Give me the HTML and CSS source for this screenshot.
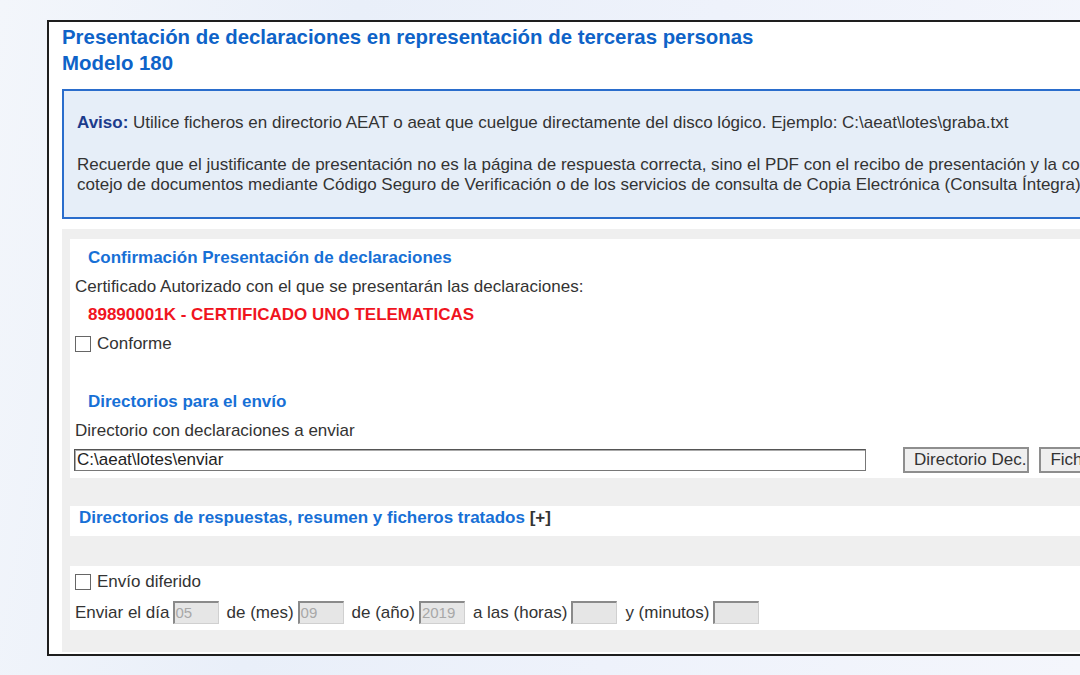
FILE: index.html
```html
<!DOCTYPE html>
<html lang="es">
<head>
<meta charset="utf-8">
<title>Modelo 180</title>
<link rel="stylesheet" href="styles.css">
</head>
<body>
<div class="page">
  <div class="panel">
    <h1 class="title">Presentación de declaraciones en representación de terceras personas<br>Modelo 180</h1>
    <div class="aviso">
      <p class="aviso-line"><b>Aviso:</b> Utilice ficheros en directorio AEAT o aeat que cuelgue directamente del disco lógico. Ejemplo: C:\aeat\lotes\graba.txt</p>
      <p class="aviso-para">Recuerde que el justificante de presentación no es la página de respuesta correcta, sino el PDF con el recibo de presentación y la copia de la declaración, que puede obtenerse mediante el<br>cotejo de documentos mediante Código Seguro de Verificación o de los servicios de consulta de Copia Electrónica (Consulta Íntegra) disponibles en la sede electrónica.</p>
    </div>
    <div class="form-area">
      <div class="box box-main">
        <h2 class="sec-title">Confirmación Presentación de declaraciones</h2>
        <p class="line">Certificado Autorizado con el que se presentarán las declaraciones:</p>
        <p class="cert">89890001K - CERTIFICADO UNO TELEMATICAS</p>
        <label class="check-row"><span class="chk"></span>Conforme</label>
        <h2 class="sec-title sec-gap">Directorios para el envío</h2>
        <p class="line">Directorio con declaraciones a enviar</p>
        <div class="dir-row">
          <div class="text-input">C:\aeat\lotes\enviar</div>
          <span class="btn">Directorio Dec.</span>
          <span class="btn">Ficheros Dec.</span>
        </div>
      </div>
      <div class="box box-bar">
        <h2 class="bar-title">Directorios de respuestas, resumen y ficheros tratados <span class="plus">[+]</span></h2>
      </div>
      <div class="box box-date">
        <label class="check-row"><span class="chk"></span>Envío diferido</label>
        <div class="date-row">
          <span>Enviar el día</span><span class="small-input">05</span>
          <span>de (mes)</span><span class="small-input">09</span>
          <span>de (año)</span><span class="small-input">2019</span>
          <span>a las (horas)</span><span class="small-input"></span>
          <span>y (minutos)</span><span class="small-input"></span>
        </div>
      </div>
    </div>
  </div>
</div>
</body>
</html>
```

FILE: styles.css
```css
* { box-sizing: border-box; }
html, body { margin: 0; padding: 0; }
body {
  width: 1080px;
  height: 675px;
  overflow: hidden;
  font-family: "Liberation Sans", Arial, sans-serif;
  background: linear-gradient(100deg, #f3f6fb 0%, #e9eff9 30%, #eef2fb 60%, #f4f6fc 100%);
}
.page {
  padding: 20px 0 0 47px;
}
.panel {
  width: 1100px;
  height: 636px;
  background: #fff;
  border: 2px solid #1e1e1e;
  border-right: none;
  padding: 2px 0 0 13px;
}
.title {
  margin: 0;
  font-size: 20.4px;
  line-height: 26px;
  font-weight: bold;
  color: #0e63c8;
}
.aviso {
  margin-top: 13px;
  border: 2px solid #2a6dcc;
  background: #e6eef8;
  padding: 20px 0 0 13px;
  height: 130px;
  color: #333;
  font-size: 17px;
  white-space: nowrap;
  overflow: hidden;
}
.aviso p { margin: 0; }
.aviso b { color: #1c3b8c; }
.aviso-line { line-height: 24px; }
.aviso-para { margin-top: 20px !important; line-height: 20px; }
.form-area {
  margin-top: 10px;
  background: #efefef;
  height: 423px;
  padding: 10px 0 0 8px;
}
.box {
  background: #fff;
}
.box-main {
  height: 239px;
  padding: 8px 0 0 5px;
}
.sec-title {
  margin: 0 0 0 13px;
  font-size: 17px;
  line-height: 22px;
  font-weight: bold;
  color: #1770d6;
}
.sec-gap { margin-top: 37px; }
.line {
  margin: 8px 0 0;
  font-size: 17px;
  line-height: 20px;
  color: #333;
}
.cert {
  margin: 8px 0 0 13px;
  font-size: 17px;
  line-height: 20px;
  font-weight: bold;
  color: #f0141e;
}
.check-row {
  display: flex;
  align-items: center;
  gap: 6px;
  margin-top: 9px;
  font-size: 17px;
  line-height: 20px;
  color: #333;
}
.chk {
  width: 16px;
  height: 16px;
  border: 1px solid #666;
  background: #fff;
  flex: none;
}
.dir-row {
  display: flex;
  align-items: center;
  margin-top: 6px;
  margin-left: -1px;
  white-space: nowrap;
}
.text-input {
  flex: none;
  width: 792px;
  height: 22px;
  border: 1px solid #777;
  border-top-color: #555;
  border-left-color: #555;
  box-shadow: inset 1px 1px 0 #aaa;
  font-size: 17px;
  line-height: 20px;
  padding-left: 2px;
  color: #222;
}
.btn {
  flex: none;
  margin-left: 37px;
  height: 26px;
  border: 2px solid #8e8e8e;
  background: #efefef;
  font-size: 17px;
  line-height: 22px;
  padding: 0 1px 0 9px;
  color: #333;
}
.btn + .btn { margin-left: 10px; }
.box-bar {
  margin-top: 28px;
  height: 30px;
  padding: 1px 0 0 9px;
}
.bar-title {
  margin: 0;
  font-size: 17px;
  line-height: 22px;
  font-weight: bold;
  color: #1770d6;
}
.plus { color: #333; }
.box-date {
  margin-top: 30px;
  height: 64px;
  padding: 0 0 0 5px;
}
.box-date .check-row { margin-top: 0; padding-top: 6px; }
.date-row {
  display: flex;
  align-items: center;
  margin-top: 9px;
  font-size: 17px;
  color: #333;
  white-space: nowrap;
}
.small-input {
  flex: none;
  width: 46px;
  height: 23px;
  margin: 0 8px 0 4px;
  background: #e6e6e6;
  border: 1px solid #d0d0d0;
  border-top: 2px solid #8a8a8a;
  border-left: 2px solid #8a8a8a;
  font-size: 15px;
  line-height: 20px;
  color: #a8a8a8;
  padding-left: 1px;
}
.date-row span:first-child + .small-input { margin-left: 3px; }
```
